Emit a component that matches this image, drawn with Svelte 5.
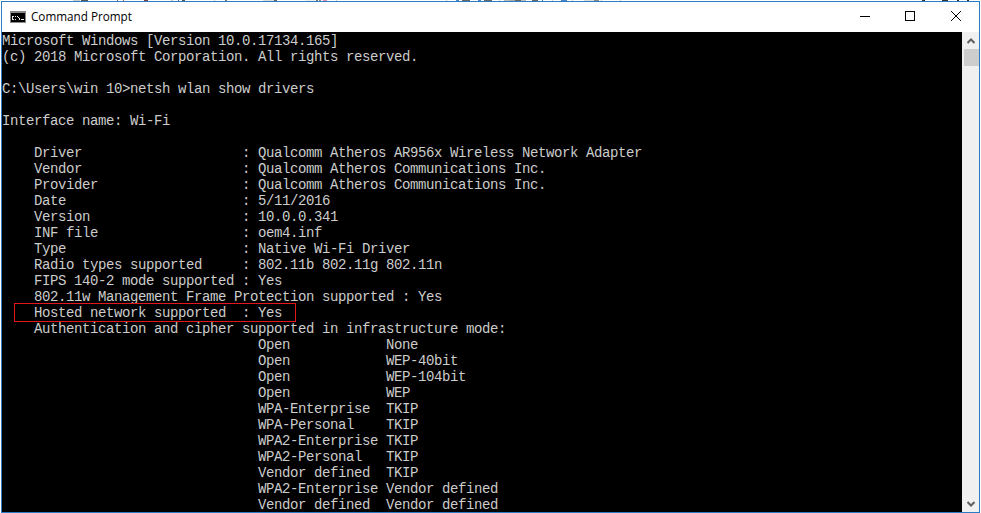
<script lang="ts">
  // Console output, one entry per row. Spacing is significant.
  const col = (name: string, value: string) => `    ${name.padEnd(26)}: ${value}`;
  const cipher = (auth: string, enc: string) => `${" ".repeat(32)}${auth.padEnd(16)}${enc}`;

  const lines = [
    "Microsoft Windows [Version 10.0.17134.165]",
    "(c) 2018 Microsoft Corporation. All rights reserved.",
    "",
    "C:\\Users\\win 10>netsh wlan show drivers",
    "",
    "Interface name: Wi-Fi",
    "",
    col("Driver", "Qualcomm Atheros AR956x Wireless Network Adapter"),
    col("Vendor", "Qualcomm Atheros Communications Inc."),
    col("Provider", "Qualcomm Atheros Communications Inc."),
    col("Date", "5/11/2016"),
    col("Version", "10.0.0.341"),
    col("INF file", "oem4.inf"),
    col("Type", "Native Wi-Fi Driver"),
    col("Radio types supported", "802.11b 802.11g 802.11n"),
    "    FIPS 140-2 mode supported : Yes",
    "    802.11w Management Frame Protection supported : Yes",
    "    Hosted network supported  : Yes",
    "    Authentication and cipher supported in infrastructure mode:",
    cipher("Open", "None"),
    cipher("Open", "WEP-40bit"),
    cipher("Open", "WEP-104bit"),
    cipher("Open", "WEP"),
    cipher("WPA-Enterprise", "TKIP"),
    cipher("WPA-Personal", "TKIP"),
    cipher("WPA2-Enterprise", "TKIP"),
    cipher("WPA2-Personal", "TKIP"),
    cipher("Vendor defined", "TKIP"),
    cipher("WPA2-Enterprise", "Vendor defined"),
    cipher("Vendor defined", "Vendor defined"),
  ];

  // Whatever sits behind the window, showing through on the top pixel row: [x, width, colour]
  const behind: [number, number, string][] = [
    [73, 7, "#ccc"], [81, 7, "#555"], [117, 1, "#a06030"], [123, 1, "#a06030"], [144, 4, "#804040"],
    [171, 2, "#ccc"], [178, 1, "#3060b0"], [182, 3, "#555"], [214, 1, "#ccc"], [225, 2, "#777"],
    [263, 11, "#ddd"], [274, 3, "#666"], [305, 11, "#eee"], [316, 2, "#777"], [319, 2, "#888"],
    [323, 4, "#e88ab0"], [336, 1, "#ccc"], [446, 1, "#ccc"], [456, 3, "#4a86c8"], [462, 8, "#666"],
    [478, 3, "#4a86c8"], [484, 8, "#666"], [499, 1, "#ccc"], [504, 6, "#bbb"], [510, 5, "#aaa"],
    [515, 6, "#666"], [521, 5, "#bbb"], [532, 6, "#666"], [542, 1, "#2b7cc4"], [552, 1, "#ccc"],
    [561, 6, "#4a86c8"], [572, 1, "#ccc"], [584, 10, "#ddd"], [594, 5, "#888"], [601, 1, "#ccc"],
    [620, 1, "#ccc"], [922, 3, "#333"], [942, 6, "#333"], [957, 2, "#333"], [967, 2, "#333"],
  ];
</script>

<div class="behind">
  {#each behind as [x, w, c]}
    <span style="left:{x}px;width:{w}px;background:{c}"></span>
  {/each}
</div>

<div class="window">
  <header class="titlebar">
    <svg class="app-icon" width="16" height="12" viewBox="0 0 16 12" aria-hidden="true">
      <rect width="16" height="12" fill="#8a8a8a" />
      <rect x="1" y="2" width="14" height="9" fill="#000" />
      <path d="M2 5h2v1H2zM2 6h1v2H2zM2 8h2v1H2zM5 5h1v1H5zM5 8h1v1H5zM7 5h1v1H7zM8 6h1v1H8zM9 7h1v2H9zM11 8h3v1h-3z" fill="#e8e8e8" />
    </svg>
    <span class="title">Command Prompt</span>
    <div class="controls">
      <svg class="min" width="10" height="1" viewBox="0 0 10 1" aria-hidden="true"><rect width="10" height="1" fill="#000" /></svg>
      <svg width="10" height="10" viewBox="0 0 10 10" aria-hidden="true"><rect x=".5" y=".5" width="9" height="9" fill="none" stroke="#000" /></svg>
      <svg width="10" height="10" viewBox="0 0 10 10" aria-hidden="true"><path d="M0 0l10 10M10 0L0 10" fill="none" stroke="#000" stroke-width="1" /></svg>
    </div>
  </header>

  <div class="body">
    <div class="console">
      {#each lines as line}
        <div class="row">{line}</div>
      {/each}
      <div class="highlight"></div>
    </div>
    <div class="scrollbar">
      <svg width="8" height="6" viewBox="0 0 8 6" aria-hidden="true"><path d="M0.5 5L4 1.5 7.5 5" fill="none" stroke="#606060" stroke-width="2" /></svg>
      <div class="thumb"></div>
      <div class="track"></div>
      <svg width="8" height="6" viewBox="0 0 8 6" aria-hidden="true"><path d="M0.5 1L4 4.5 7.5 1" fill="none" stroke="#606060" stroke-width="2" /></svg>
    </div>
  </div>
</div>

<style>
  :global(body) {
    margin: 0;
    background: #fff;
    overflow: hidden;
  }

  .behind {
    position: relative;
    height: 1px;
  }

  .behind span {
    position: absolute;
    top: 0;
    height: 1px;
  }

  .window {
    box-sizing: border-box;
    width: 979px;
    height: 512px;
    margin-left: 1px;
    border: 1px solid #2b7cc4;
    display: flex;
    flex-direction: column;
    background: #fff;
    overflow: hidden;
  }

  /* ── Title bar ── */
  .titlebar {
    flex: 0 0 30px;
    box-sizing: border-box;
    display: flex;
    align-items: center;
    padding: 0 0 2px 8px;
    font-family: "Open Sans", "Noto Sans", sans-serif;
    font-size: 11.7px;
    color: #000;
  }

  .app-icon {
    margin-right: 5px;
    margin-top: 1px;
  }

  .title {
    line-height: 16px;
  }

  .controls {
    margin-left: auto;
    display: flex;
    align-items: center;
    gap: 36px;
    padding-right: 18px;
  }

  .min {
    margin-right: -1px;
  }

  /* ── Console ── */
  .body {
    flex: 1;
    display: flex;
    min-height: 0;
  }

  .console {
    position: relative;
    width: 960px;
    padding-top: 1px;
    box-sizing: border-box;
    background: #000;
    color: #ccc;
    font-family: "Liberation Mono", "DejaVu Sans Mono", monospace;
    font-size: 14px;
    letter-spacing: -0.4px;
    line-height: 16px;
    overflow: hidden;
  }

  .row {
    height: 16px;
    white-space: pre;
  }

  .highlight {
    position: absolute;
    left: 12px;
    top: 271px;
    width: 282px;
    height: 19px;
    box-sizing: border-box;
    border: 1px solid #e3151d;
  }

  /* ── Scrollbar ── */
  .scrollbar {
    flex: 0 0 17px;
    display: flex;
    flex-direction: column;
    align-items: center;
    background: #f0f0f0;
    padding: 6px 0 5px;
    box-sizing: border-box;
  }

  .thumb {
    width: 15px;
    height: 17px;
    margin-top: 5px;
    margin-left: 1px;
    background: #cdcdcd;
  }

  .track {
    flex: 1;
  }
</style>
